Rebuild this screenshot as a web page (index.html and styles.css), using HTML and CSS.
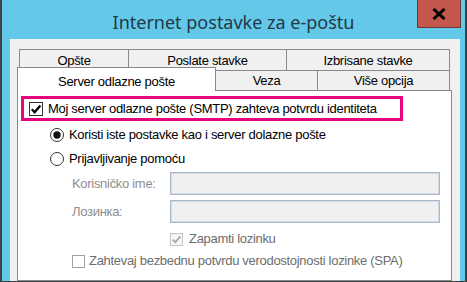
FILE: index.html
```html
<!DOCTYPE html>
<html lang="sr">
<head>
<meta charset="utf-8">
<title>Internet postavke za e-poštu</title>
<link rel="stylesheet" href="styles.css">
</head>
<body>
<div class="window">
  <div class="titlebar">
    <div class="tb-side"></div>
    <div class="title">Internet postavke za e-poštu</div>
    <div class="tb-side tb-right">
      <div class="close">
        <svg width="14" height="12" viewBox="0 0 14 12"><path d="M1.5 1 L12.5 11 M12.5 1 L1.5 11" stroke="#000" stroke-width="3" fill="none"/></svg>
      </div>
    </div>
  </div>
  <div class="client">
    <div class="tabrow back">
      <div class="tab t-opste">Opšte</div>
      <div class="tab t-poslate">Poslate stavke</div>
      <div class="tab t-izbrisane last">Izbrisane stavke</div>
    </div>
    <div class="tabrow front">
      <div class="tab selected">Server odlazne pošte</div>
      <div class="tab t-veza">Veza</div>
      <div class="tab t-vise last">Više opcija</div>
    </div>
    <div class="panel">
      <div class="highlight">
        <span class="check">
          <svg width="12" height="12" viewBox="0 0 12 12"><path d="M1.8 6.2 L4.6 9.2 L10.4 2.4" stroke="#000" stroke-width="2.3" fill="none"/></svg>
        </span>
        <span class="lbl">Moj server odlazne pošte (SMTP) zahteva potvrdu identiteta</span>
      </div>
      <div class="radio-row">
        <svg class="radio" width="14" height="14" viewBox="0 0 14 14"><circle cx="7" cy="7" r="6.5" fill="#fff" stroke="#333"/><circle cx="7" cy="7" r="3.7" fill="#111"/></svg>
        <span class="lbl">Koristi iste postavke kao i server dolazne pošte</span>
      </div>
      <div class="radio-row">
        <svg class="radio" width="14" height="14" viewBox="0 0 14 14"><circle cx="7" cy="7" r="6.5" fill="#fff" stroke="#333"/></svg>
        <span class="lbl">Prijavljivanje pomoću</span>
      </div>
      <div class="creds">
        <span class="flabel">Korisničko ime:</span>
        <span class="field"></span>
        <span class="flabel">Лозинка:</span>
        <span class="field"></span>
      </div>
      <div class="remember">
        <span class="check small disabled">
          <svg width="11" height="11" viewBox="0 0 12 12"><path d="M2 6.2 L4.7 9 L10.2 2.6" stroke="#a6a6a6" stroke-width="2" fill="none"/></svg>
        </span>
        <span class="lbl dim">Zapamti lozinku</span>
      </div>
      <div class="spa">
        <span class="check small empty"></span>
        <span class="lbl dim">Zahtevaj bezbednu potvrdu verodostojnosti lozinke (SPA)</span>
      </div>
    </div>
  </div>
</div>
</body>
</html>
```
FILE: styles.css
```css
* { box-sizing: border-box; }
html, body { margin: 0; padding: 0; }
body {
  width: 467px;
  height: 282px;
  overflow: hidden;
  font-family: "Liberation Sans", Arial, sans-serif;
  font-size: 13px;
  letter-spacing: -0.3px;
  color: #000;
}
.window {
  width: 467px;
  height: 282px;
  background: #64c8e9;
  border-left: 2px solid #3c4246;
  border-right: 2px solid #3c4246;
  border-bottom: 1px solid #3c4246;
  display: flex;
  flex-direction: column;
}
.titlebar {
  height: 39px;
  display: grid;
  grid-template-columns: 1fr auto 1fr;
  align-items: start;
}
.title {
  font-family: "Noto Sans", "Open Sans", sans-serif;
  font-size: 18px;
  letter-spacing: 0;
  color: #22394a;
  line-height: 26px;
  padding-top: 9px;
  white-space: nowrap;
}
.tb-right { display: flex; justify-content: flex-end; padding-right: 4px; }
.close {
  width: 44px;
  height: 28px;
  background: #c5584d;
  border: 1px solid #6b3934;
  border-top: none;
  display: flex;
  align-items: center;
  justify-content: center;
}
.client {
  flex: 1;
  margin: 0 5px 0 8px;
  background: #f0f0f0;
  padding: 10px 8px 0 7px;
  display: flex;
  flex-direction: column;
}
.tabrow { display: flex; }
.tabrow.back { margin: 0 2px; }
.tabrow.front { margin-right: 2px; align-items: flex-start; }
.tab {
  height: 21px;
  border-top: 1px solid #898989;
  border-left: 1px solid #898989;
  background: #f0f0f0;
  display: flex;
  align-items: center;
  justify-content: center;
  white-space: nowrap;
}
.tab.last { border-right: 1px solid #898989; }
.t-opste { width: 109px; }
.t-poslate { width: 158px; }
.t-izbrisane { width: 164px; }
.front .tab { height: 20px; }
.front .tab.selected {
  width: 199px;
  height: 24px;
  margin-top: -3px;
  margin-bottom: -1px;
  background: #fff;
  border-right: 1px solid #898989;
  padding-top: 4px;
  z-index: 2;
}
.t-veza { width: 101px; border-left: none !important; }
.t-vise { flex: 1; }
.panel {
  flex: 1;
  background: #fff;
  border: 1px solid #898989;
  display: flex;
  flex-direction: column;
  align-items: flex-start;
}
.highlight {
  margin: 5px 0 0 3px;
  width: 382px;
  height: 25px;
  border: 3px solid #e5067f;
  display: flex;
  align-items: center;
  padding-left: 5px;
  gap: 5px;
}
.check {
  width: 14px;
  height: 14px;
  border: 1px solid #333;
  background: #fff;
  display: flex;
  align-items: center;
  justify-content: center;
  flex: none;
}
.check.small { width: 13px; height: 13px; }
.check.disabled { border-color: #c2c2c2; background: #f7f7f7; }
.check.empty { border-color: #a2a2a2; }
.lbl { white-space: nowrap; line-height: 16px; }
.dim { color: #6d6d6d; }
.radio-row {
  height: 24px;
  padding-left: 32px;
  display: flex;
  align-items: center;
  gap: 5px;
}
.highlight + .radio-row { margin-top: 2px; }
.radio { display: block; flex: none; }
.creds {
  margin-top: 1px;
  padding-left: 54px;
  display: grid;
  grid-template-columns: 98px 270px;
  grid-auto-rows: 23px;
  row-gap: 5px;
  align-items: center;
}
.flabel { color: #8d8d8d; white-space: nowrap; }
.field {
  height: 23px;
  background: #f0f0f0;
  border: 1px solid #a9b9ca;
  box-shadow: inset 0 0 0 1px #d2dce6;
}
.remember {
  margin-top: 5px;
  height: 22px;
  padding-left: 152px;
  display: flex;
  align-items: center;
  gap: 6px;
}
.spa {
  height: 22px;
  padding-left: 54px;
  display: flex;
  align-items: center;
  gap: 4px;
}
```
